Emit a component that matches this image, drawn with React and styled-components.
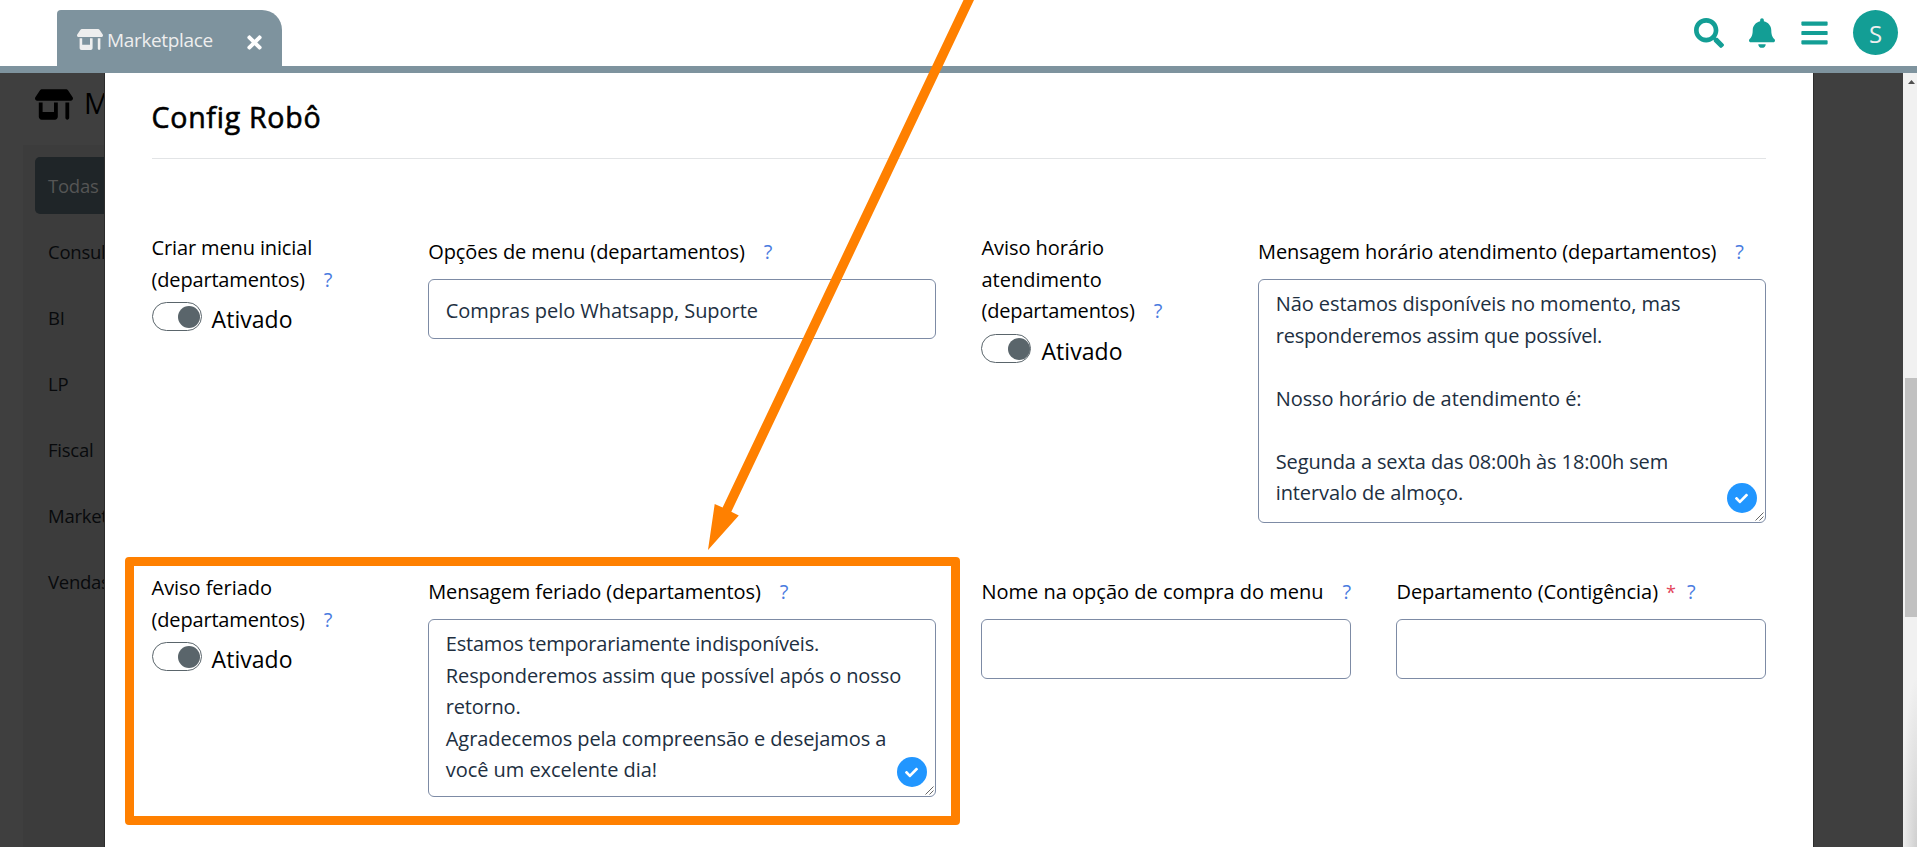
import React from "react";
import styled, { createGlobalStyle, css } from "styled-components";
import { FaSearch, FaBell, FaBars, FaTimes, FaCheck } from "react-icons/fa";
import { FaShop } from "react-icons/fa6";

const GlobalStyle = createGlobalStyle`
  *, *::before, *::after { box-sizing: border-box; }
  html, body { margin: 0; padding: 0; overflow: hidden; }
  body {
    background: #fff;
    color: #000;
    font-family: "Segoe UI", "Open Sans", "Noto Sans", sans-serif;
    font-size: 20px;
    line-height: 31.6px;
  }
`;

const Page = styled.div`
  position: relative;
  display: flex;
  flex-direction: column;
  width: 1917px;
  height: 847px;
  overflow: hidden;
`;

const TopBar = styled.header`
  display: flex;
  align-items: flex-end;
  justify-content: space-between;
  flex: none;
  height: 73px;
  padding: 0 19px 0 57px;
  border-bottom: 7px solid #7e939e;
`;

const Tab = styled.div`
  display: flex;
  align-items: center;
  width: 225px;
  height: 56px;
  padding: 0 20px;
  border-radius: 4px 20px 0 0;
  background: #7e939e;
  color: #eee;
`;

const TabIcon = styled(FaShop)`
  width: 26px;
  height: 21px;
  margin-top: 3px;
`;

const TabTitle = styled.span`
  flex: 1;
  margin: 5px 0 0 4px;
  font-size: 19px;
  letter-spacing: ${(p) => p.$ls || 0}px;
`;

const TabClose = styled(FaTimes)`
  width: 21px;
  height: 21px;
  margin: 9px -3px 0 0;
  color: #fff;
`;

const Actions = styled.nav`
  display: flex;
  align-items: center;
  align-self: flex-start;
  height: 66px;
  color: #139e95;
`;

const ActionIcon = styled.span`
  display: flex;
  margin-right: ${(p) => p.$gap}px;
  svg { width: ${(p) => p.$w}px; height: 30px; }
`;

const Avatar = styled.div`
  width: 45px;
  height: 45px;
  margin-top: -1px;
  border-radius: 50%;
  background: #139e95;
  color: #eee;
  font-size: 24px;
  line-height: 47px;
  text-align: center;
`;

const Body = styled.div`
  display: flex;
  flex: 1;
  min-height: 0;
  background: #3f3f3f;
`;

const Side = styled.aside`
  flex: none;
  width: 105px;
  overflow: hidden;
  white-space: nowrap;
  border-right: 1px solid #2c2c2c;
`;

const SideTitle = styled.div`
  display: flex;
  align-items: center;
  height: 72px;
  padding: 0 0 10px 34.5px;
  font-size: 28.5px;
  svg { flex: none; width: 38px; height: 31px; margin-right: 11.5px; }
`;

const SideMenu = styled.ul`
  height: 702px;
  margin: 0 0 0 23px;
  padding: 12px 0 0 12px;
  list-style: none;
  background: #3c3c3c;
`;

const SideItem = styled.li`
  height: 57px;
  margin-bottom: 9px;
  padding-left: 13px;
  border-radius: 5px 0 0 5px;
  color: #080a0c;
  font-size: 18.5px;
  line-height: 57px;
  letter-spacing: -0.25px;
  ${(p) => p.$active && css`
    background: #1f2528;
    color: #555;
  `}
`;

const Modal = styled.main`
  width: 1708px;
  padding: 0 47.6px 0 46.55px;
  background: #fff;
`;

const ModalTitle = styled.h2`
  height: 86px;
  margin: 0 -0.8px 73px 0;
  padding-top: 21px;
  border-bottom: 1px solid #e2e4e6;
  font-size: 28.5px;
  font-weight: 400;
  line-height: 46px;
  letter-spacing: ${(p) => p.$ls || 0}px;
  -webkit-text-stroke: 0.6px currentColor;
`;

const Row = styled.div`
  display: grid;
  grid-template-columns: repeat(12, 1fr);
  column-gap: 46px;
  height: 340px;
`;

const Field = styled.div`
  grid-column: span ${(p) => p.$span};
  min-width: 0;
`;

const Label = styled.div`
  padding-top: ${(p) => (p.$offset ? 4 : 0)}px;
  margin-bottom: ${(p) => (p.$offset ? 11.4 : 6.8)}px;
  white-space: nowrap;
`;

const TextLine = styled.div`
  min-height: 31.6px;
  letter-spacing: ${(p) => p.$ls || 0}px;
`;

const Help = styled.span`
  margin-left: ${(p) => p.$gap ?? 19}px;
  color: #4a7be0;
  letter-spacing: 0;
`;

const Required = styled.span`
  margin-left: 8px;
  color: #e3445a;
  font-size: 18px;
  line-height: 0;
  letter-spacing: 0;
`;

const Control = styled.div`
  position: relative;
  height: ${(p) => p.$h}px;
  margin-right: -0.8px;
  padding: ${(p) => (p.$area ? 8.4 : 15)}px 16.6px 0;
  border: 1px solid #7d8ba5;
  border-radius: 6px;
  background: #fff;
  color: #212f3f;
  line-height: 31.5px;
  white-space: nowrap;
  ${TextLine} { min-height: 31.5px; }
`;

const CheckBadge = styled.span`
  position: absolute;
  right: 8px;
  bottom: 8.6px;
  display: flex;
  align-items: center;
  justify-content: center;
  width: 30px;
  height: 30px;
  border-radius: 50%;
  background: #2196ff;
  color: #fff;
  svg { width: 13px; height: 13px; margin: 1px 1px 0 0; }
`;

const Grip = styled.svg`
  position: absolute;
  right: 1px;
  bottom: 1px;
`;

const SwitchRow = styled.div`
  display: flex;
  align-items: flex-start;
`;

const Switch = styled.span`
  display: flex;
  justify-content: flex-end;
  align-items: center;
  width: 50px;
  height: 29px;
  padding: 1px 0.5px 0 0;
  border: 1px solid #5a656b;
  border-radius: 15px;
  &::after {
    content: "";
    width: 22px;
    height: 22px;
    border-radius: 50%;
    background: #5a656b;
  }
`;

const SwitchText = styled.span`
  margin: 0 0 0 10px;
  font-size: 23px;
  line-height: 34px;
  letter-spacing: 0.05px;
`;

const Gutter = styled.div`
  width: 90px;
  border-left: 1px solid #2c2c2c;
`;

const ScrollTrack = styled.div`
  width: 14px;
  padding: 7px 0 0 2px;
  background: radial-gradient(16px 170px at 100% 100%, #cfcfcf, #f1f1f1);
  svg { display: block; margin: 0 0 294px 3px; }
`;

const ScrollThumb = styled.div`
  height: 239px;
  background: #c1c1c1;
`;

const Highlight = styled.div`
  position: absolute;
  left: 125px;
  top: 557px;
  width: 835px;
  height: 268px;
  border: 9px solid #ff8000;
  border-radius: 4px;
`;

const Arrow = styled.svg`
  position: absolute;
  left: 0;
  top: 0;
  pointer-events: none;
`;

function ToggleField({ lines }) {
  return (
    <Field $span={2}>
      <Label>
        {lines.map(([text, ls], i) => (
          <TextLine key={text} $ls={ls}>
            {text}
            {i === lines.length - 1 && <Help>?</Help>}
          </TextLine>
        ))}
      </Label>
      <SwitchRow>
        <Switch />
        <SwitchText>Ativado</SwitchText>
      </SwitchRow>
    </Field>
  );
}

function InputField({ span, label, ls, required, height = 60, area, lines = [] }) {
  return (
    <Field $span={span}>
      <Label $offset>
        <TextLine $ls={ls}>
          {label}
          {required && <Required>*</Required>}
          <Help $gap={required ? 11 : 19}>?</Help>
        </TextLine>
      </Label>
      <Control $h={height} $area={area}>
        {lines.map(([text, lineLs], i) => (
          <TextLine key={i} $ls={lineLs}>{text}</TextLine>
        ))}
        {area && (
          <>
            <CheckBadge><FaCheck /></CheckBadge>
            <Grip width="9" height="9" viewBox="0 0 9 9" stroke="#555" strokeWidth="0.9">
              <path d="M0.5 8.5 8.5 0.5M4.5 8.5 8.5 4.5" />
            </Grip>
          </>
        )}
      </Control>
    </Field>
  );
}

const categories = ["Todas", "Consultoria", "BI", "LP", "Fiscal", "Marketing", "Vendas"];

const businessHours = [
  ["Não estamos disponíveis no momento, mas", -0.08],
  ["responderemos assim que possível.", -0.21],
  ["", 0],
  ["Nosso horário de atendimento é:", -0.07],
  ["", 0],
  ["Segunda a sexta das 08:00h às 18:00h sem", -0.12],
  ["intervalo de almoço.", -0.1],
];

const holiday = [
  ["Estamos temporariamente indisponíveis.", -0.21],
  ["Responderemos assim que possível após o nosso", -0.11],
  ["retorno.", -0.2],
  ["Agradecemos pela compreensão e desejamos a", -0.07],
  ["você um excelente dia!", -0.05],
];

export default function App() {
  return (
    <Page>
      <GlobalStyle />
      <TopBar>
        <Tab>
          <TabIcon />
          <TabTitle $ls={-0.34}>Marketplace</TabTitle>
          <TabClose />
        </Tab>
        <Actions>
          <ActionIcon $w={30} $gap={25}><FaSearch /></ActionIcon>
          <ActionIcon $w={26} $gap={26}><FaBell /></ActionIcon>
          <ActionIcon $w={27} $gap={25}><FaBars /></ActionIcon>
          <Avatar>S</Avatar>
        </Actions>
      </TopBar>
      <Body>
        <Side>
          <SideTitle><FaShop />Marketplace</SideTitle>
          <SideMenu>
            {categories.map((name, i) => (
              <SideItem key={name} $active={i === 0}>{name}</SideItem>
            ))}
          </SideMenu>
        </Side>
        <Modal>
          <ModalTitle $ls={0.75}>Config Robô</ModalTitle>
          <Row>
            <ToggleField lines={[["Criar menu inicial", -0.13], ["(departamentos)", -0.17]]} />
            <InputField span={4} label="Opções de menu (departamentos)" ls={-0.09} lines={[["Compras pelo Whatsapp, Suporte", -0.05]]} />
            <ToggleField lines={[["Aviso horário", -0.05], ["atendimento", 0], ["(departamentos)", -0.17]]} />
            <InputField span={4} label="Mensagem horário atendimento (departamentos)" ls={-0.11} height={244} area lines={businessHours} />
          </Row>
          <Row>
            <ToggleField lines={[["Aviso feriado", -0.05], ["(departamentos)", -0.17]]} />
            <InputField span={4} label="Mensagem feriado (departamentos)" ls={-0.09} height={178} area lines={holiday} />
            <InputField span={3} label="Nome na opção de compra do menu" ls={0} />
            <InputField span={3} label="Departamento (Contigência)" ls={-0.05} required />
          </Row>
        </Modal>
        <Gutter />
        <ScrollTrack>
          <svg width="7" height="4" viewBox="0 0 7 4"><path d="M0 4 3.5 0 7 4Z" fill="#505050" /></svg>
          <ScrollThumb />
        </ScrollTrack>
      </Body>
      <Highlight />
      <Arrow width="1917" height="847" viewBox="0 0 1917 847" fill="#ff8000">
        <path d="M963.5 0H974L731.3 511.8 738.8 515.5 708 550 714.7 504 722.6 507.6Z" />
      </Arrow>
    </Page>
  );
}
